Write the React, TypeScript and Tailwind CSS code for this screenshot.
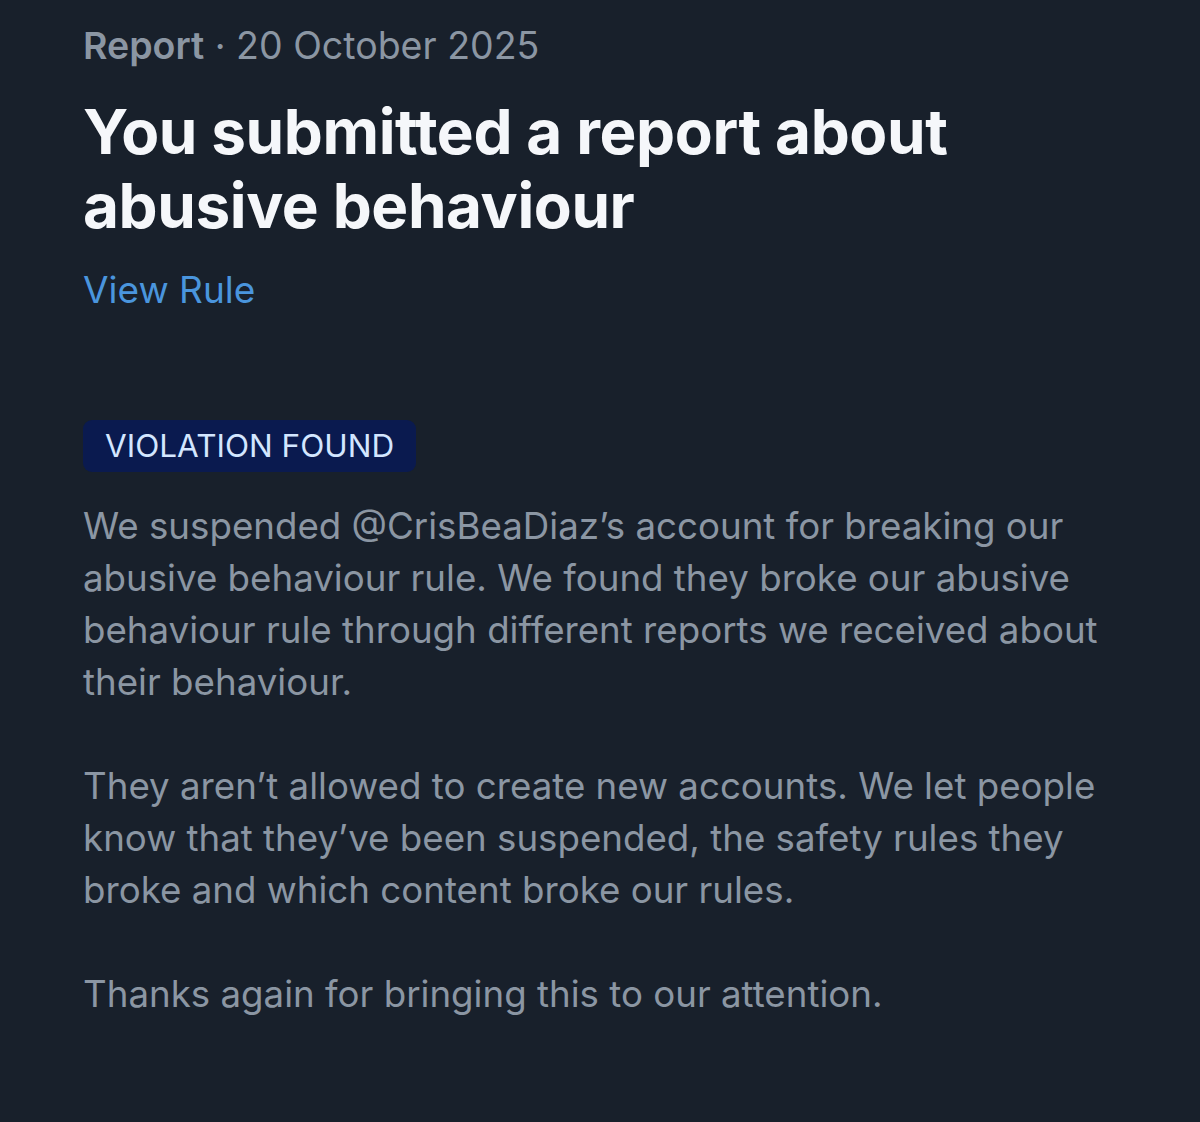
export default function App() {
  const font = { fontFamily: 'Inter, "Noto Sans", sans-serif' };
  return (
    <div className="min-h-[1122px] w-[1200px] bg-[#18202b] pl-[83px] pt-[24px]" style={font}>
      <div className="text-[37.5px] leading-[44px] text-[#8b96a3] whitespace-nowrap">
        <span className="font-semibold">Report</span>
        <span> · 20 October 2025</span>
      </div>
      <h1 className="mt-[27px] text-[62px] leading-[74px] font-bold tracking-[-0.4px] text-[#f5f7fa]">
        <span className="block whitespace-nowrap">You submitted a report about</span>
        <span className="block whitespace-nowrap">abusive behaviour</span>
      </h1>
      <div className="mt-[25px] text-[37px] leading-[44px] text-[#4a95dd]">View Rule</div>
      <div className="mt-[108px] inline-flex h-[52px] items-center rounded-[9px] bg-[#0a1a4f] px-[22px] text-[31.5px] text-[#d3e6ff]">
        VIOLATION FOUND
      </div>
      <div className="mt-[28px] text-[36.7px] leading-[52px] text-[#8b96a3]">
        <p>
          <span className="block whitespace-nowrap">We suspended @CrisBeaDiaz’s account for breaking our</span>
          <span className="block whitespace-nowrap">abusive behaviour rule. We found they broke our abusive</span>
          <span className="block whitespace-nowrap">behaviour rule through different reports we received about</span>
          <span className="block whitespace-nowrap">their behaviour.</span>
        </p>
        <p className="mt-[52px]">
          <span className="block whitespace-nowrap">They aren’t allowed to create new accounts. We let people</span>
          <span className="block whitespace-nowrap">know that they’ve been suspended, the safety rules they</span>
          <span className="block whitespace-nowrap">broke and which content broke our rules.</span>
        </p>
        <p className="mt-[52px]">
          <span className="block whitespace-nowrap">Thanks again for bringing this to our attention.</span>
        </p>
      </div>
    </div>
  );
}
